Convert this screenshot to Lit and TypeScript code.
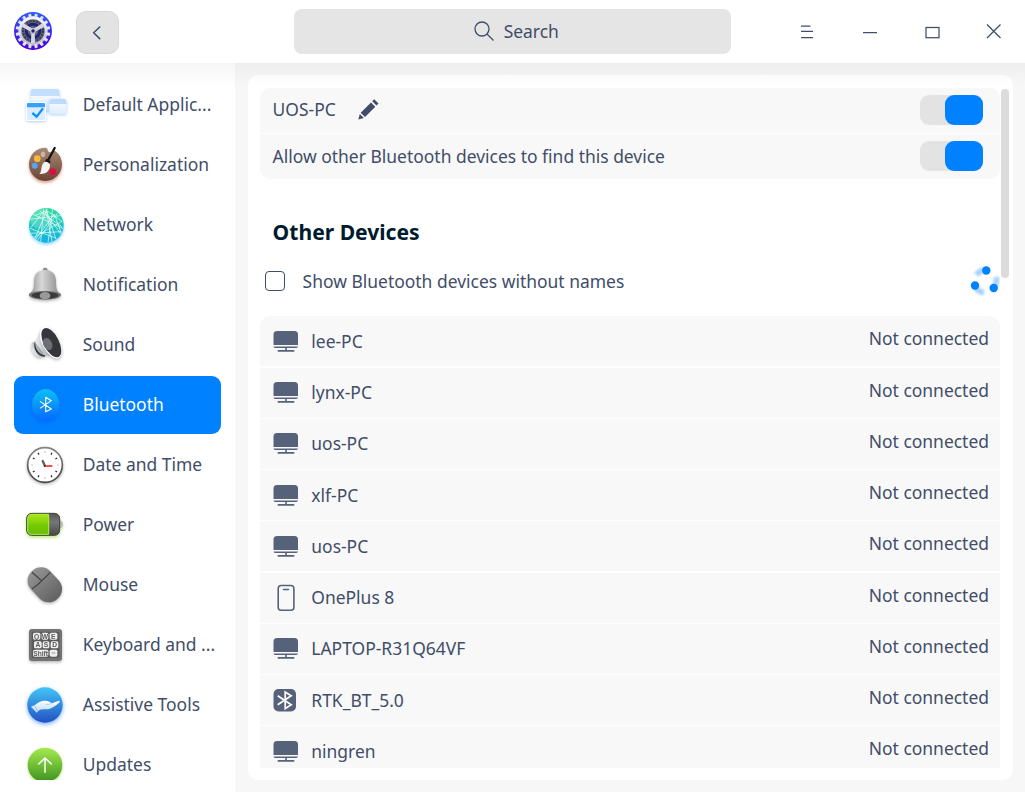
import { LitElement, html, css, svg, SVGTemplateResult } from "lit";
import { customElement, state } from "lit/decorators.js";
import { classMap } from "lit/directives/class-map.js";

interface NavItem { label: string; view: string; icon: SVGTemplateResult; }

const ticks = (n: number) => Array.from({ length: n }, (_, i) => i);

const gear = svg`
  <defs>
    <linearGradient id="lg" x1="0" y1="0" x2="0" y2="1"><stop offset="0" stop-color="#2c5cff"/><stop offset="1" stop-color="#4a00d8"/></linearGradient>
    <linearGradient id="gg" x1="0" y1="0" x2="0" y2="1"><stop offset="0" stop-color="#fdfdff"/><stop offset="1" stop-color="#b4b4d0"/></linearGradient>
  </defs>
  <circle cx="99" cy="93" r="57" fill="url(#lg)"/>
  <circle cx="99" cy="93" r="44" fill="url(#gg)"/>
  ${ticks(16).map(i => svg`<rect x="94.500" y="41" width="9" height="12" rx="2" fill="#e4e5f2" transform="rotate(${i * 22.5 + 11.25} 99 93)"/>`)}
  <circle cx="99" cy="93" r="35" fill="#62677a"/>
  <circle cx="99" cy="93" r="30" fill="none" stroke="#343950" stroke-width="6" stroke-dasharray="6 4"/>
  <circle cx="99" cy="93" r="25" fill="#23246c"/>
  <circle cx="99" cy="93" r="16" fill="#5d6280"/>
  ${[60, 180, 300].map(a => svg`<path d="M94 93 93 57h12l-1 36z" fill="#d6d7e5" transform="rotate(${a} 99 93)"/>`)}
  <circle cx="99" cy="93" r="9" fill="#c3c4d8"/><circle cx="99" cy="93" r="5" fill="#22226e"/>`;

const items: NavItem[] = [
  { label: "Default Applic...", view: "66 243 144 144", icon: svg`
    <defs><linearGradient id="w" x1="0" y1="0" x2="0" y2="1"><stop offset="0" stop-color="#fff"/><stop offset="1" stop-color="#dcecfd"/></linearGradient></defs>
    <g class="blue-shadow"><rect x="92" y="267" width="86" height="66" rx="7" fill="url(#w)"/>
    <path d="M92 288v-14q0-7 7-7h72q7 0 7 7v14z" fill="#c3dfff"/></g>
    <g class="blue-shadow"><rect x="148" y="297" width="51" height="46" rx="6" fill="url(#w)"/>
    <path d="M148 312v-9q0-6 6-6h39q6 0 6 6v9z" fill="#bcdbff"/></g>
    <g class="blue-shadow"><rect x="78" y="306" width="60" height="57" rx="6" fill="#fff"/>
    <path d="M81 320h54v36q0 4-4 4H85q-4 0-4-4z" fill="#dcecfd"/><path d="M81 322v-10q0-3 3-3h48q3 0 3 3v10z" fill="#36a1ff"/>
    <path d="m97 339 13 11 19-25" fill="none" stroke="#0693fb" stroke-width="7"/></g>` },
  { label: "Personalization", view: "66 33 144 144", icon: svg`
    <defs><linearGradient id="pal" x1="0" y1="0" x2="0" y2="1"><stop offset="0" stop-color="#a98b76"/><stop offset="1" stop-color="#694435"/></linearGradient></defs>
    <path class="red-shadow" d="M136 53c10 0 4 12 14 14 8 1 8-8 14-5 12 7 22 22 22 41 0 28-22 50-50 50s-49-22-49-50 21-50 49-50z" fill="url(#pal)"/>
    <ellipse cx="129" cy="73" rx="8" ry="10" fill="#cdb5a7" stroke="#8e7262" stroke-width="2"/>
    <circle cx="112" cy="86" r="10" fill="#f9b637"/><circle cx="104" cy="107" r="9" fill="#58a4f4"/><circle cx="158" cy="125" r="10" fill="#e10c42"/>
    <path d="m164 54-21 39" stroke="#171717" stroke-width="7" stroke-linecap="round"/><path d="m139 86 13 8-4 9-14-8z" fill="#161616"/>
    <path d="M134 96c6-2 16 3 16 9 0 18-12 28-32 27 9-7 3-30 16-36z" fill="#f4f2ef"/>` },
  { label: "Network", view: "66 213 144 144", icon: svg`
    <defs><linearGradient id="net" x1=".3" y1="0" x2=".4" y2="1"><stop offset="0" stop-color="#31dc98"/><stop offset="1" stop-color="#12b1e6"/></linearGradient><clipPath id="nc"><circle cx="139" cy="286" r="52"/></clipPath></defs>
    <circle class="cyan-shadow" cx="139" cy="286" r="52" fill="url(#net)"/>
    <g clip-path="url(#nc)"><circle cx="120" cy="267" r="30" fill="#fff" opacity=".2"/>
    <g fill="none" stroke="#e6fff8" stroke-width="2.500" opacity=".85">
    <path d="m88 268 102-12M92 250l98 46M131 235l-9 101M138 235l18 100M142 236l-38 92M132 242l53 73M120 243l65 47M106 256l34-14 46 32M92 310l92-5M90 295l79 30M100 323l86-49M107 328l56-76 21 58M131 244l-38 48M158 237l-14 100M174 248l-62 83M140 242l28 86"/></g></g>` },
  { label: "Notification", view: "66 18 144 144", icon: svg`
    <defs><linearGradient id="bell" x1="0" y1="0" x2="1" y2="0"><stop offset="0" stop-color="#8e8e8e"/><stop offset=".4" stop-color="#d8d8d8"/><stop offset="1" stop-color="#878787"/></linearGradient></defs>
    <g class="shadow"><rect x="129" y="38" width="13" height="14" rx="5" fill="#8c8c8c"/>
    <path d="M135 45c24 0 33 15 33 35 0 23 3 29 13 36 6 9-12 17-46 17s-53-8-47-17c11-8 14-14 14-36 0-20 9-35 33-35z" fill="url(#bell)"/>
    <path d="M88 117c12-12 82-12 94 0 5 9-17 17-47 17s-52-8-47-17z" fill="#6d6d6d"/><ellipse cx="135" cy="121" rx="40" ry="10" fill="#393939"/><ellipse cx="135" cy="122" rx="16" ry="11" fill="#999"/></g>` },
  { label: "Sound", view: "66 198 144 144", icon: svg`
    <defs><linearGradient id="sp"><stop offset="0" stop-color="#eceef2"/><stop offset="1" stop-color="#868a93"/></linearGradient></defs>
    <g class="shadow"><ellipse cx="111" cy="283" rx="15" ry="25" transform="rotate(-28 111 283)" fill="url(#sp)"/>
    <path d="m106 263 20-42 42 86-36-10z" fill="url(#sp)"/><path d="M106 263c-1 16 9 34 30 38l-3 5c-22-3-32-22-30-41z" fill="#37393d"/>
    <ellipse cx="153" cy="263" rx="26" ry="52" transform="rotate(-27 153 263)" fill="#fff"/><ellipse cx="154" cy="263" rx="23" ry="48" transform="rotate(-27 154 263)" fill="#34363a"/>
    <ellipse cx="143" cy="267" rx="13" ry="19" transform="rotate(-27 143 267)" fill="#6c7075"/></g>` },
  { label: "Bluetooth", view: "66 33 144 144", icon: svg`
    <defs><linearGradient id="bt" x1="0" y1="0" x2="0" y2="1"><stop offset="0" stop-color="#0cc0f6"/><stop offset="1" stop-color="#0669ff"/></linearGradient></defs>
    <ellipse class="bt-shadow" cx="137" cy="105" rx="41" ry="48" fill="url(#bt)"/>
    <path d="m120 94 34 23-17 8V82l17 10-34 23" fill="none" stroke="#fff" stroke-width="3.2" stroke-linejoin="round"/>` },
  { label: "Date and Time", view: "66 213 144 144", icon: svg`
    <defs><linearGradient id="ck" x1="0" y1="0" x2="0" y2="1"><stop offset="0" stop-color="#858585"/><stop offset="1" stop-color="#444"/></linearGradient></defs>
    <circle class="shadow" cx="135" cy="285" r="52" fill="#fff" stroke="url(#ck)" stroke-width="5"/>
    ${ticks(12).map(i => svg`<path d="M135 243v6" stroke=${i % 3 ? "#222" : "#ccc"} stroke-width="3.5" transform="rotate(${i * 30} 135 285)"/>`)}
    <path d="m128 273 6 13" stroke="#5b6060" stroke-width="7" stroke-linecap="round"/><path d="M134 288h23" stroke="#f6504d" stroke-width="6"/><circle cx="134" cy="288" r="3" fill="#333"/>` },
  { label: "Power", view: "66 33 144 144", icon: svg`
    <defs><linearGradient id="pw" x1="0" y1="0" x2="0" y2="1"><stop offset="0" stop-color="#a8e61b"/><stop offset=".6" stop-color="#72c802"/><stop offset="1" stop-color="#69bc00"/></linearGradient><linearGradient id="pg" x1="0" y1="0" x2="0" y2="1"><stop offset="0" stop-color="#555"/><stop offset=".4" stop-color="#777"/><stop offset="1" stop-color="#484848"/></linearGradient></defs>
    <g class="green-shadow"><path d="M178 90q11 2 11 13t-11 13z" fill="#bbb"/><rect x="80" y="70" width="99" height="66" rx="15" fill="url(#pg)" stroke="#414141" stroke-width="3"/>
    <path d="M146 73H96q-13 0-13 13v34q0 13 13 13h50z" fill="url(#pw)" stroke="#aef23a" stroke-width="3"/></g>` },
  { label: "Mouse", view: "66 213 144 144", icon: svg`
    <defs><linearGradient id="mo" x1="0" y1="0" x2="0" y2="1"><stop offset="0" stop-color="#939393"/><stop offset="1" stop-color="#626262"/></linearGradient></defs>
    <g class="shadow"><rect x="95" y="228" width="79" height="113" rx="38" transform="rotate(-43 134.500 284.500)" fill="url(#mo)"/>
    <path d="M96 297q20-14 29-25 14-12 26-25M96 247l29 25" fill="none" stroke="#464646" stroke-width="4"/></g>` },
  { label: "Keyboard and ...", view: "66 33 144 144", icon: svg`
    <g class="shadow"><rect x="87" y="57" width="99" height="96" rx="9" fill="#737373"/><rect x="95" y="65" width="83" height="79" rx="4" fill="#5c5c5c"/>
    <g fill="#eee">${[[99, 68, 22], [125, 68, 20], [149, 68, 23], [102, 94, 23], [128, 94, 20], [152, 94, 23], [99, 119, 46], [149, 119, 23]].map(k => svg`<rect x=${k[0]} y=${k[1]} width=${k[2]} height="21" rx="5"/>`)}</g>
    <g class="keys"><text x="110" y="86">Q</text><text x="135" y="86">W</text><text x="160" y="86">E</text><text x="114" y="111">A</text><text x="138" y="111">S</text><text x="164" y="111">D</text><text x="122" y="137">Shift</text></g><path d="M155 129h11" stroke="#999" stroke-width="3"/></g>` },
  { label: "Assistive Tools", view: "66 213 144 144", icon: svg`
    <defs><linearGradient id="as" x1="0" y1="0" x2="0" y2="1"><stop offset="0" stop-color="#42c6f7"/><stop offset="1" stop-color="#2450c3"/></linearGradient><linearGradient id="ha" x1="0" y1="0" x2="0" y2="1"><stop offset="0" stop-color="#fff"/><stop offset="1" stop-color="#b8d7fa"/></linearGradient></defs>
    <circle class="blue-shadow strong" cx="135" cy="285" r="53" fill="url(#as)"/>
    <path d="m93 290 12-5c8-8 20-14 33-13 6 0 12 3 17 8l22-8q5 1 0 6c-13 12-25 20-39 20-10 0-17 0-22 4l-6 6z" fill="url(#ha)"/><path d="m104 287 9 16" stroke="#79b5ee" stroke-width="2"/><path d="M155 280q-8 5-19 3" fill="none" stroke="#8fc0ee" stroke-width="2"/>` },
  { label: "Updates", view: "66 393 144 144", icon: svg`
    <defs><linearGradient id="up" x1="0" y1="0" x2="0" y2="1"><stop offset="0" stop-color="#a5eb4e"/><stop offset="1" stop-color="#3d9121"/></linearGradient></defs>
    <circle class="green-shadow" cx="135" cy="465" r="52" fill="url(#up)"/>
    <path d="M135 488v-44m-20 19 20-19 20 19" fill="none" stroke="#fff" stroke-width="4.500"/>` },
];

const devices: [string, "pc" | "phone" | "bt"][] = [
  ["lee-PC", "pc"], ["lynx-PC", "pc"], ["uos-PC", "pc"], ["xlf-PC", "pc"], ["uos-PC", "pc"],
  ["OnePlus 8", "phone"], ["LAPTOP-R31Q64VF", "pc"], ["RTK_BT_5.0", "bt"], ["ningren", "pc"],
];

const deviceIcons = {
  pc: svg`<path d="M.5 17V6.500Q.5 3 4 3h17.500q3.500 0 3.500 3.500V17zM.5 18.400h24.500q-.6 1.600-2 1.600H13.800v2h6.700q1 0 1 .9t-1 .9h-15q-1 0-1-.9t1-.9h6.700v-2H2.500Q1 20 .5 18.400z" fill="#56627a"/>`,
  phone: svg`<rect x="5.200" y="1.500" width="15.700" height="24.700" rx="3" fill="none" stroke="#56627a" stroke-width="1.600"/><path d="M10.500 5.500h5" stroke="#56627a" stroke-width="1.500" stroke-linecap="round"/>`,
  bt: svg`<rect x=".5" y="2" width="22.500" height="22.500" rx="5" fill="#56627a"/><path d="m4.700 8.700 13.500 9-6 4V5l6 3.800-13.500 9" fill="none" stroke="#fff" stroke-width="1.700"/>`,
};

@customElement("app-root")
export class AppRoot extends LitElement {
  @state() private selected = 5;
  @state() private power = true;
  @state() private discoverable = true;

  static styles = css`
    :host { display: flex; flex-direction: column; width: 100%; height: 100vh; overflow: hidden; background: #fff; color: #414d68; font: 17.470px/24px "Noto Sans", sans-serif; }
    * { box-sizing: border-box; }
    svg { display: block; flex: none; }
    .titlebar { display: flex; height: 63px; flex: none; }
    .logo { margin: 11px 0 0 13px; }
    .back { display: grid; place-items: center; width: 43px; height: 43px; margin: 11px 0 0 23px; padding: 0; border: 1px solid #d9d9d9; border-radius: 10px; background: #e3e3e3; }
    .search { display: flex; align-items: center; justify-content: center; gap: 9.500px; width: 437px; height: 45px; margin: 9px 0 0 175px; padding: 0 0 2px 8px; border-radius: 8px; background: #e5e5e5; }
    .search svg { margin-top: 1px; }
    .controls { margin: 0 0 0 49px; }
    .body { position: relative; display: flex; flex: 1; min-height: 0; }
    .body::after { content: ""; position: absolute; inset: 0 0 auto; height: 22px; background: linear-gradient(rgba(0,0,0,.035), transparent); pointer-events: none; }
    .sidebar { width: 235px; height: 717px; padding: 13.300px 0 0 13.700px; overflow: hidden; flex: none; }
    .nav { display: flex; align-items: center; gap: 12.800px; width: 207.500px; height: 57.400px; margin-bottom: 2.600px; padding-left: 8.300px; border-radius: 9px; white-space: nowrap; }
    .nav span { margin-top: -1.500px; }
    .nav.active { background: #0081ff; color: #fff; }
    .main { flex: 1; min-width: 0; padding: 12px 12px 12px 12.500px; background: #f7f7f7; }
    .panel { display: flex; height: 705px; padding: 13px 4px 12px 12.500px; border-radius: 10px; background: #fff; }
    .content { width: 740px; height: 680px; overflow: hidden; flex: none; }
    .scrollbar { width: 8px; height: 189px; margin: 1px 0 0 1px; border-radius: 4px; background: #dbdbdb; }
    .card { display: flex; flex-direction: column; overflow: hidden; border-radius: 10px; }
    .settings { gap: 1.250px; height: 91px; }
    .setting { display: flex; align-items: center; flex: 1; padding: 0 17.500px 1px 12.600px; background: #f8f8f8; }
    .setting span { margin-top: -1px; }
    .pencil { margin-left: 22px; }
    .toggle { width: 63px; height: 30px; margin-left: auto; padding: 0; border: 0; border-radius: 9px; background: #e3e3e3; }
    .toggle::before { content: ""; display: block; width: 38px; height: 30px; border-radius: 9px; background: #aaa; }
    .toggle.on::before { margin-left: 25px; background: #0081ff; }
    h2 { margin: 38px 0 0 12.600px; color: #001a2e; font-size: 21.100px; line-height: 30px; font-weight: 700; }
    .filter { display: flex; align-items: center; height: 30px; margin-top: 19px; padding-left: 5px; }
    .check { width: 20px; height: 20px; margin-right: 17.600px; border: 1.600px solid #414d68; border-radius: 4px; }
    .spinner { margin-left: auto; }
    .devices { gap: 1.250px; margin-top: 20.300px; }
    .device { display: flex; align-items: center; height: 50px; padding: 0 11px 0 13px; flex: none; background: #f8f8f8; }
    .name { margin: -1px 0 0 12.300px; }
    .status { margin: -6px 0 0 auto; }
    .shadow { filter: drop-shadow(0 4px 4px rgba(0,0,0,.3)); }
    .blue-shadow { filter: drop-shadow(0 3px 4px rgba(60,145,235,.4)); }
    .blue-shadow.strong { filter: drop-shadow(0 5px 6px rgba(20,120,255,.6)); }
    .red-shadow { filter: drop-shadow(0 6px 5px rgba(180,70,40,.5)); }
    .cyan-shadow { filter: drop-shadow(0 6px 5px rgba(30,180,240,.5)); }
    .green-shadow { filter: drop-shadow(0 6px 5px rgba(140,215,20,.5)); }
    .bt-shadow { filter: drop-shadow(0 6px 6px rgba(0,95,255,.6)); }
    .keys { font: 700 20px "Liberation Sans", sans-serif; fill: #5c5c5c; text-anchor: middle; }
  `;

  private toggle(on: boolean, flip: () => void) {
    return html`<button class=${classMap({ toggle: true, on })} @click=${flip}></button>`;
  }

  render() {
    return html`
      <header class="titlebar">
        <svg class="logo" width="40" height="40" viewBox="39 33 120 120">${gear}</svg>
        <button class="back"><svg width="16" height="16" viewBox="0 0 16 16"><path d="m10.200 1.500-6.500 6.300 6.500 6.300" fill="none" stroke="#414d68" stroke-width="1.500"/></svg></button>
        <div class="search">
          <svg width="20" height="20" viewBox="0 0 20 20"><g fill="none" stroke="#414d68" stroke-width="1.300"><circle cx="8" cy="8" r="7"/><path d="m13 13 6.500 6.500"/></g></svg>
          <span>Search</span>
        </div>
        <svg class="controls" width="245" height="63" viewBox="780 0 245 63"><g fill="none" stroke="#414d68" stroke-width="1.250">
          <path d="M801 26h9.500M801 31.300h12M801 37.500h12M863 32.500h14"/><rect x="926" y="27.500" width="13" height="10.200"/><path d="m987 24.500 13.500 13.500m0-13.500-13.500 13.500"/>
        </g></svg>
      </header>
      <div class="body">
        <nav class="sidebar">
          ${items.map((it, i) => html`
            <div class=${classMap({ nav: true, active: i === this.selected })} @click=${() => (this.selected = i)}>
              <svg width="48" height="48" viewBox=${it.view}>${it.icon}</svg><span>${it.label}</span>
            </div>`)}
        </nav>
        <main class="main">
          <div class="panel">
            <div class="content">
              <section class="card settings">
                <div class="setting"><span>UOS-PC</span>
                  <svg class="pencil" width="21" height="21" viewBox="0 0 21 21"><path d="m14.200 2.200 2-1.900 4.300 4.300-2 2zM13 3.500l4.300 4.300L7 18l-4.300-4.300zM1.800 15l4 4L.3 20.500z" fill="#414d68"/></svg>
                  ${this.toggle(this.power, () => (this.power = !this.power))}</div>
                <div class="setting"><span>Allow other Bluetooth devices to find this device</span>
                  ${this.toggle(this.discoverable, () => (this.discoverable = !this.discoverable))}</div>
              </section>
              <h2>Other Devices</h2>
              <div class="filter"><span class="check"></span><span>Show Bluetooth devices without names</span>
                <svg class="spinner" width="30" height="32" viewBox="0 0 30 32">
                  <defs><filter id="soft" x="-30%" y="-30%" width="160%" height="160%"><feGaussianBlur stdDeviation="1.300"/></filter></defs>
                  <g fill="none" stroke-width="6" filter="url(#soft)"><path d="M15.500 5Q10 5 6.500 10M24 22q3.500-4 2-10M5 21q3 6 9 6.500" stroke="#8cc6ff" opacity=".75"/></g>
                  <g fill="#0081ff"><circle cx="16.300" cy="5.500" r="4.200"/><circle cx="5" cy="20.500" r="4.200"/><circle cx="23.700" cy="23" r="4.200"/></g>
                </svg></div>
              <section class="card devices">
                ${devices.map(([name, kind]) => html`<div class="device">
                  <svg width="26" height="27" viewBox="0 0 26 27">${deviceIcons[kind]}</svg>
                  <span class="name">${name}</span><span class="status">Not connected</span></div>`)}
              </section>
            </div>
            <div class="scrollbar"></div>
          </div>
        </main>
      </div>`;
  }
}
